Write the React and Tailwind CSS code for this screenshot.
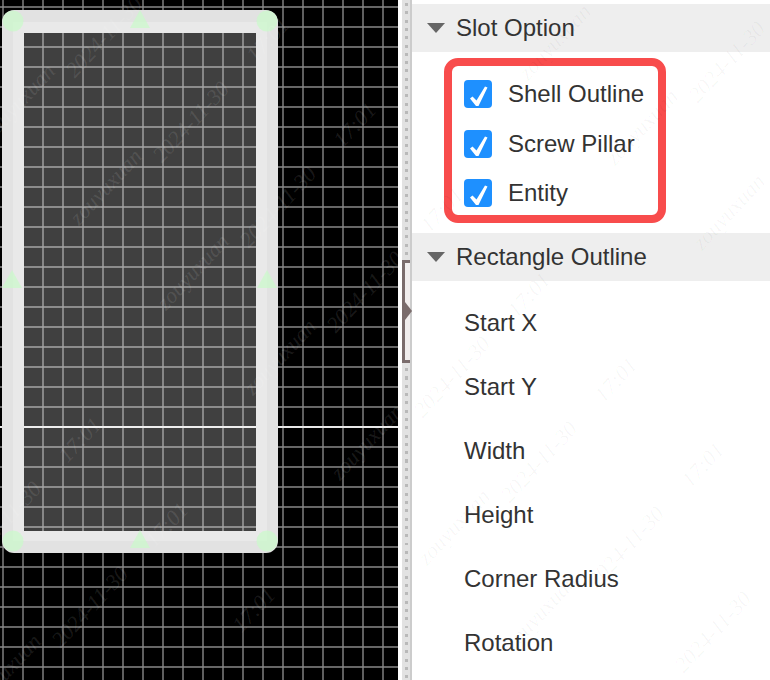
const xs = Array.from({ length: 20 }, (_, i) => 3 + i * 20);
const ys = Array.from({ length: 34 }, (_, i) => 7 + i * 20);

const marks = [];
for (let m = -3; m < 5; m++) {
  for (let n = -3; n < 10; n++) {
    const x = 3 + n * 87 + m * 275;
    const y = 522 + n * 85 - m * 315;
    marks.push(["2024-11-30", x, y]);
    marks.push(["17:01", x + 77, y - 82]);
    marks.push(["zouyuxuan", x - 85, y + 65]);
  }
}

function Marks({ from, to, className }) {
  return (
    <div className="absolute inset-0 pointer-events-none overflow-hidden">
      {marks
        .filter(([, x, y]) => x >= from && x < to && y >= 0 && y < 680)
        .map(([t, x, y], i) => (
          <span
            key={i}
            className={"absolute whitespace-nowrap text-[22px] italic font-['Liberation_Serif',serif] leading-none " + className}
            style={{ left: x - from, top: y, transform: "translate(-50%,-50%) rotate(-47deg)" }}
          >
            {t}
          </span>
        ))}
    </div>
  );
}

function Canvas() {
  return (
    <div className="relative w-[398px] h-full flex-none bg-black">
      <svg width="398" height="680" className="block">
        <defs>
          <filter id="soft" x="-2%" y="-2%" width="104%" height="104%">
            <feGaussianBlur stdDeviation="0.5" />
          </filter>
        </defs>
        <g filter="url(#soft)">
          {xs.map((x) => (
            <line key={x} x1={x} x2={x} y1="0" y2="680" stroke="#888888" strokeWidth="1.4" />
          ))}
          {ys.map((y) => (
            <line key={y} x1="0" x2="398" y1={y} y2={y} stroke="#888888" strokeWidth="1.4" />
          ))}
          <line x1="0" x2="398" y1="427" y2="427" stroke="#e8e8e8" strokeWidth="1.8" />
          <rect x="24" y="33" width="232" height="498" fill="#ffffff" fillOpacity="0.25" />
          <path
            fillRule="evenodd"
            fill="#e2e2e2"
            d="M14 10H266A12 12 0 0 1 278 22V541A12 12 0 0 1 266 553H14A12 12 0 0 1 2 541V22A12 12 0 0 1 14 10ZM24 33V531H256V33Z"
          />
          <path fill="#e9e9e9" d="M13 22H267V33H24V531H256V33H267V541H13Z" fillRule="evenodd" />
          <g fill="#c8fcc8" fillOpacity="0.65">
            <circle cx="13" cy="21" r="10.5" />
            <circle cx="267" cy="21" r="10.5" />
            <circle cx="13" cy="541" r="10.5" />
            <circle cx="267" cy="541" r="10.5" />
            <path d="M140 10L150 28H130Z" />
            <path d="M140 530L150 548H130Z" />
            <path d="M12 270L22 288H2Z" />
            <path d="M267 270L277 288H257Z" />
          </g>
        </g>
      </svg>
      <Marks from={0} to={398} className="text-white/[0.11]" />
    </div>
  );
}

function Splitter() {
  return (
    <div className="w-[14px] h-full flex-none bg-white flex pl-[4px]">
      <div className="relative w-[10px] h-full bg-[#e2e2e2] border-r-2 border-[#cccccc]">
        <div className="absolute left-[3px] top-0 w-[3px] h-full bg-[repeating-linear-gradient(to_bottom,#e2e2e2_0px,#e2e2e2_3px,#b9b9b9_3px,#b9b9b9_6px,#e2e2e2_6px,#e2e2e2_8.3px)]" />
        <div className="absolute left-0 top-[260px] w-[8px] h-[103px] bg-[#f1eeee] border-l-[3px] border-y-[3px] border-[#7a6c6c]">
          <svg width="8" height="18" className="absolute left-0 top-[39px] block overflow-visible">
            <path d="M0 0L7 9L0 18Z" fill="#7a6c6c" />
          </svg>
        </div>
      </div>
    </div>
  );
}

function Header({ children, className }) {
  return (
    <div className={"h-[48px] bg-[#eeeeee] flex items-center pl-[15px] gap-[11px] text-[24px] text-[#333333] " + className}>
      <svg width="18" height="10" className="block">
        <path d="M0 0H18L9 10Z" fill="#666666" />
      </svg>
      <span>{children}</span>
    </div>
  );
}

function Check({ label, className }) {
  return (
    <div className={"flex items-center gap-[16px] h-[28px] " + className}>
      <div className="w-[28px] h-[28px] rounded-[4px] bg-[#1e90ff] flex items-center justify-center">
        <svg width="28" height="28" className="block">
          <path d="M6 18.5L8.5 16.5L12.5 20.5L21 6.5L23.5 7.5L14.5 26L12 26Z" fill="#ffffff" />
        </svg>
      </div>
      <span className="text-[24px] text-[#333333] leading-none">{label}</span>
    </div>
  );
}

const rows = ["Start X", "Start Y", "Width", "Height", "Corner Radius", "Rotation"];

function Panel() {
  return (
    <div className="relative flex-1 h-full bg-white pt-[4px] min-w-0">
      <Header>Slot Option</Header>
      <div className="ml-[32px] mt-[6px] w-[222px] h-[165px] rounded-[14px] border-8 border-[#f84c4c] pt-[14px] pl-[12px] box-border">
        <Check label="Shell Outline" />
        <Check label="Screw Pillar" className="mt-[22px]" />
        <Check label="Entity" className="mt-[21px]" />
      </div>
      <Header className="mt-[10px]">Rectangle Outline</Header>
      <div className="pl-[52px] pt-[10px] flex flex-col">
        {rows.map((r) => (
          <div key={r} className="h-[64px] flex items-center text-[24px] text-[#333333]">
            {r}
          </div>
        ))}
      </div>
      <Marks from={412} to={770} className="text-black/[0.035]" />
    </div>
  );
}

export default function App() {
  return (
    <div className="w-[770px] h-[680px] overflow-hidden flex font-['Liberation_Sans',Arial,sans-serif]">
      <Canvas />
      <Splitter />
      <Panel />
    </div>
  );
}
